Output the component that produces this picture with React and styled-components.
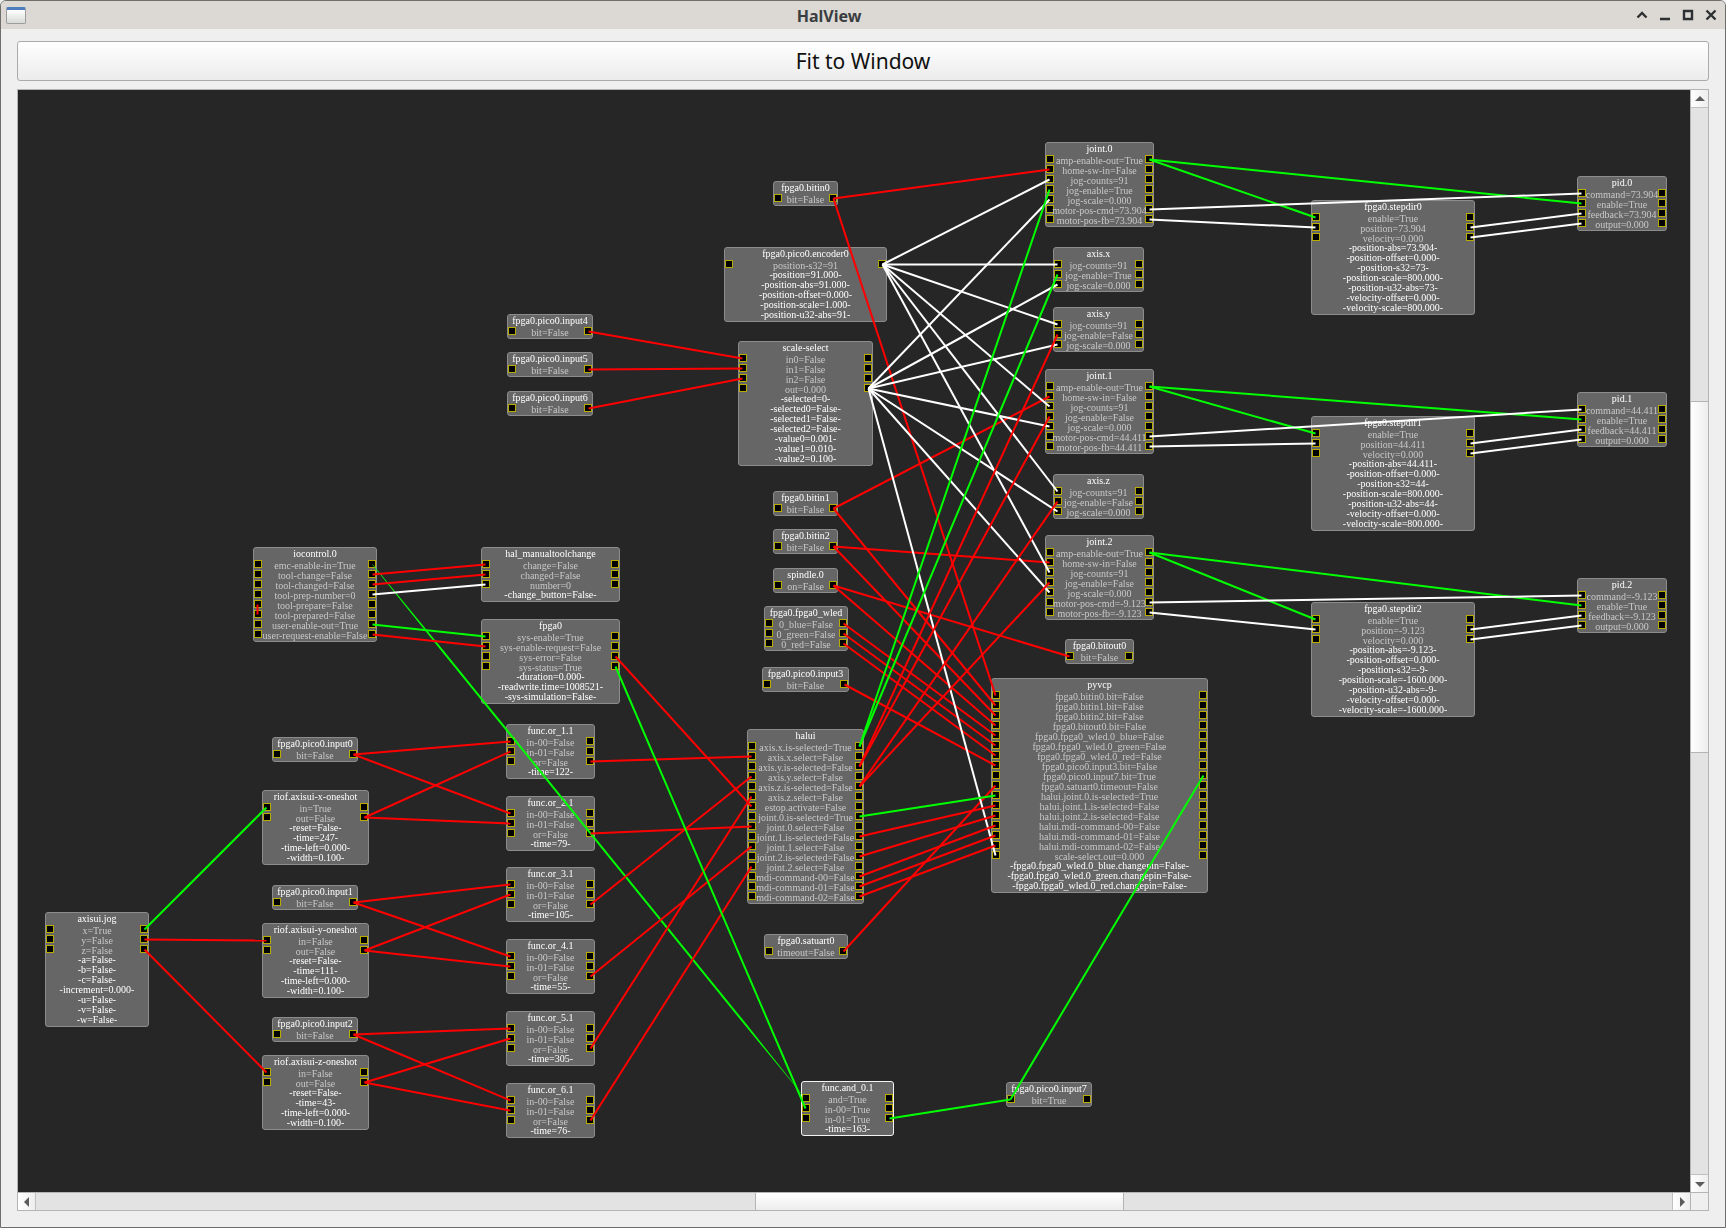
import React from "react";
import styled, { createGlobalStyle } from "styled-components";

const Global = createGlobalStyle`
  html, body { margin: 0; padding: 0; overflow: hidden; background: #efefef; }
  * { box-sizing: border-box; }
`;

/* Scene origin in page pixels; node coordinates below are page pixels. */
const OX = 18;
const OY = 90;

const pins = (...l) => l;
const NODES = {
  jog: { t: "axisui.jog", x: 45, y: 912, w: 104, p: pins("x=True", "y=False", "z=False"), a: ["-a=False-", "-b=False-", "-c=False-", "-increment=0.000-", "-u=False-", "-v=False-", "-w=False-"] },
  riofx: { t: "riof.axisui-x-oneshot", x: 262, y: 790, w: 107, p: pins("in=True", "out=False"), a: ["-reset=False-", "-time=247-", "-time-left=0.000-", "-width=0.100-"] },
  riofy: { t: "riof.axisui-y-oneshot", x: 262, y: 923, w: 107, p: pins("in=False", "out=False"), a: ["-reset=False-", "-time=111-", "-time-left=0.000-", "-width=0.100-"] },
  riofz: { t: "riof.axisui-z-oneshot", x: 262, y: 1055, w: 107, p: pins("in=False", "out=False"), a: ["-reset=False-", "-time=43-", "-time-left=0.000-", "-width=0.100-"] },
  in0: { t: "fpga0.pico0.input0", x: 272, y: 737, w: 86, p: pins("bit=False") },
  in1: { t: "fpga0.pico0.input1", x: 272, y: 885, w: 86, p: pins("bit=False") },
  in2: { t: "fpga0.pico0.input2", x: 272, y: 1017, w: 86, p: pins("bit=False") },
  f1: { t: "func.or_1.1", x: 506, y: 724, w: 89, p: pins("in-00=False", "in-01=False", "or=False"), a: ["-time=122-"] },
  f2: { t: "func.or_2.1", x: 506, y: 796, w: 89, p: pins("in-00=False", "in-01=False", "or=False"), a: ["-time=79-"] },
  f3: { t: "func.or_3.1", x: 506, y: 867, w: 89, p: pins("in-00=False", "in-01=False", "or=False"), a: ["-time=105-"] },
  f4: { t: "func.or_4.1", x: 506, y: 939, w: 89, p: pins("in-00=False", "in-01=False", "or=False"), a: ["-time=55-"] },
  f5: { t: "func.or_5.1", x: 506, y: 1011, w: 89, p: pins("in-00=False", "in-01=False", "or=False"), a: ["-time=305-"] },
  f6: { t: "func.or_6.1", x: 506, y: 1083, w: 89, p: pins("in-00=False", "in-01=False", "or=False"), a: ["-time=76-"] },
  io: { t: "iocontrol.0", x: 253, y: 547, w: 124, p: pins("emc-enable-in=True", "tool-change=False", "tool-changed=False", "tool-prep-number=0", "tool-prepare=False", "tool-prepared=False", "user-enable-out=True", "user-request-enable=False") },
  hal: { t: "hal_manualtoolchange", x: 481, y: 547, w: 139, p: pins("change=False", "changed=False", "number=0"), a: ["-change_button=False-"] },
  fpga: { t: "fpga0", x: 481, y: 619, w: 139, p: pins("sys-enable=True", "sys-enable-request=False", "sys-error=False", "sys-status=True"), a: ["-duration=0.000-", "-readwrite.time=1008521-", "-sys-simulation=False-"] },
  in4: { t: "fpga0.pico0.input4", x: 507, y: 314, w: 86, p: pins("bit=False") },
  in5: { t: "fpga0.pico0.input5", x: 507, y: 352, w: 86, p: pins("bit=False") },
  in6: { t: "fpga0.pico0.input6", x: 507, y: 391, w: 86, p: pins("bit=False") },
  bit0: { t: "fpga0.bitin0", x: 773, y: 181, w: 65, p: pins("bit=False") },
  enc: { t: "fpga0.pico0.encoder0", x: 724, y: 247, w: 163, p: pins("position-s32=91"), a: ["-position=91.000-", "-position-abs=91.000-", "-position-offset=0.000-", "-position-scale=1.000-", "-position-u32-abs=91-"] },
  sel: { t: "scale-select", x: 738, y: 341, w: 135, p: pins("in0=False", "in1=False", "in2=False", "out=0.000"), a: ["-selected=0-", "-selected0=False-", "-selected1=False-", "-selected2=False-", "-value0=0.001-", "-value1=0.010-", "-value2=0.100-"] },
  bit1: { t: "fpga0.bitin1", x: 773, y: 491, w: 65, p: pins("bit=False") },
  bit2: { t: "fpga0.bitin2", x: 773, y: 529, w: 65, p: pins("bit=False") },
  sp: { t: "spindle.0", x: 773, y: 568, w: 65, p: pins("on=False") },
  wled: { t: "fpga0.fpga0_wled", x: 764, y: 606, w: 84, p: pins("0_blue=False", "0_green=False", "0_red=False") },
  in3: { t: "fpga0.pico0.input3", x: 762, y: 667, w: 87, p: pins("bit=False") },
  halui: { t: "halui", x: 747, y: 729, w: 117, p: pins("axis.x.is-selected=True", "axis.x.select=False", "axis.y.is-selected=False", "axis.y.select=False", "axis.z.is-selected=False", "axis.z.select=False", "estop.activate=False", "joint.0.is-selected=True", "joint.0.select=False", "joint.1.is-selected=False", "joint.1.select=False", "joint.2.is-selected=False", "joint.2.select=False", "mdi-command-00=False", "mdi-command-01=False", "mdi-command-02=False") },
  sat: { t: "fpga0.satuart0", x: 764, y: 934, w: 84, p: pins("timeout=False") },
  and: { t: "func.and_0.1", x: 801, y: 1081, w: 93, hot: true, p: pins("and=True", "in-00=True", "in-01=True"), a: ["-time=163-"] },
  in7: { t: "fpga0.pico0.input7", x: 1006, y: 1082, w: 86, p: pins("bit=True") },
  pyvcp: { t: "pyvcp", x: 991, y: 678, w: 217, p: pins("fpga0.bitin0.bit=False", "fpga0.bitin1.bit=False", "fpga0.bitin2.bit=False", "fpga0.bitout0.bit=False", "fpga0.fpga0_wled.0_blue=False", "fpga0.fpga0_wled.0_green=False", "fpga0.fpga0_wled.0_red=False", "fpga0.pico0.input3.bit=False", "fpga0.pico0.input7.bit=True", "fpga0.satuart0.timeout=False", "halui.joint.0.is-selected=True", "halui.joint.1.is-selected=False", "halui.joint.2.is-selected=False", "halui.mdi-command-00=False", "halui.mdi-command-01=False", "halui.mdi-command-02=False", "scale-select.out=0.000"), a: ["-fpga0.fpga0_wled.0_blue.changepin=False-", "-fpga0.fpga0_wled.0_green.changepin=False-", "-fpga0.fpga0_wled.0_red.changepin=False-"] },
  j0: { t: "joint.0", x: 1045, y: 142, w: 109, p: pins("amp-enable-out=True", "home-sw-in=False", "jog-counts=91", "jog-enable=True", "jog-scale=0.000", "motor-pos-cmd=73.904", "motor-pos-fb=73.904") },
  ax: { t: "axis.x", x: 1053, y: 247, w: 91, p: pins("jog-counts=91", "jog-enable=True", "jog-scale=0.000") },
  ay: { t: "axis.y", x: 1053, y: 307, w: 91, p: pins("jog-counts=91", "jog-enable=False", "jog-scale=0.000") },
  j1: { t: "joint.1", x: 1045, y: 369, w: 109, p: pins("amp-enable-out=True", "home-sw-in=False", "jog-counts=91", "jog-enable=False", "jog-scale=0.000", "motor-pos-cmd=44.411", "motor-pos-fb=44.411") },
  az: { t: "axis.z", x: 1053, y: 474, w: 91, p: pins("jog-counts=91", "jog-enable=False", "jog-scale=0.000") },
  j2: { t: "joint.2", x: 1045, y: 535, w: 109, p: pins("amp-enable-out=True", "home-sw-in=False", "jog-counts=91", "jog-enable=False", "jog-scale=0.000", "motor-pos-cmd=-9.123", "motor-pos-fb=-9.123") },
  bo: { t: "fpga0.bitout0", x: 1065, y: 639, w: 69, p: pins("bit=False") },
  sd0: { t: "fpga0.stepdir0", x: 1311, y: 200, w: 164, p: pins("enable=True", "position=73.904", "velocity=0.000"), a: ["-position-abs=73.904-", "-position-offset=0.000-", "-position-s32=73-", "-position-scale=800.000-", "-position-u32-abs=73-", "-velocity-offset=0.000-", "-velocity-scale=800.000-"] },
  sd1: { t: "fpga0.stepdir1", x: 1311, y: 416, w: 164, p: pins("enable=True", "position=44.411", "velocity=0.000"), a: ["-position-abs=44.411-", "-position-offset=0.000-", "-position-s32=44-", "-position-scale=800.000-", "-position-u32-abs=44-", "-velocity-offset=0.000-", "-velocity-scale=800.000-"] },
  sd2: { t: "fpga0.stepdir2", x: 1311, y: 602, w: 164, p: pins("enable=True", "position=-9.123", "velocity=0.000"), a: ["-position-abs=-9.123-", "-position-offset=0.000-", "-position-s32=-9-", "-position-scale=-1600.000-", "-position-u32-abs=-9-", "-velocity-offset=0.000-", "-velocity-scale=-1600.000-"] },
  pid0: { t: "pid.0", x: 1577, y: 176, w: 90, p: pins("command=73.904", "enable=True", "feedback=73.904", "output=0.000") },
  pid1: { t: "pid.1", x: 1577, y: 392, w: 90, p: pins("command=44.411", "enable=True", "feedback=44.411", "output=0.000") },
  pid2: { t: "pid.2", x: 1577, y: 578, w: 90, p: pins("command=-9.123", "enable=True", "feedback=-9.123", "output=0.000") },
};

const RED = "#ff0000";
const GREEN = "#00ff00";
const WHITE = "#ffffff";

const WIRES = [
  [GREEN, "jog.R0", "riofx.L0"], [RED, "jog.R1", "riofy.L0"], [RED, "jog.R2", "riofz.L0"],
  [RED, "in0.R0", "f1.L0"], [RED, "in0.R0", "f2.L0"], [RED, "riofx.R1", "f1.L1"], [RED, "riofx.R1", "f2.L1"],
  [RED, "in1.R0", "f3.L0"], [RED, "in1.R0", "f4.L0"], [RED, "riofy.R1", "f3.L1"], [RED, "riofy.R1", "f4.L1"],
  [RED, "in2.R0", "f5.L0"], [RED, "in2.R0", "f6.L0"], [RED, "riofz.R1", "f5.L1"], [RED, "riofz.R1", "f6.L1"],
  [RED, "f1.R2", "halui.L1"], [RED, "f2.R2", "halui.L8"], [RED, "f3.R2", "halui.L3"], [RED, "f4.R2", "halui.L10"],
  [RED, "f5.R2", "halui.L5"], [RED, "f6.R2", "halui.L12"], [RED, "fpga.R2", "halui.L6"],
  [RED, "io.R1", "hal.L0"], [RED, "io.R2", "hal.L1"], [WHITE, "io.R3", "hal.L2"],
  [GREEN, "io.R6", "fpga.L0"], [RED, "io.R7", "fpga.L1"], [RED, "io.L4", "io.L5"],
  [GREEN, "fpga.R3", "and.L1"], [GREEN, "and.R2", "in7.L0"], [GREEN, "in7.L0", "pyvcp.R8"],
  [RED, "in4.R0", "sel.L0"], [RED, "in5.R0", "sel.L1"], [RED, "in6.R0", "sel.L2"],
  [RED, "bit0.R0", "j0.L1"], [RED, "bit0.R0", "pyvcp.L0"], [RED, "bit1.R0", "j1.L1"], [RED, "bit1.R0", "pyvcp.L1"],
  [RED, "bit2.R0", "j2.L1"], [RED, "bit2.R0", "pyvcp.L2"], [RED, "sp.R0", "bo.L0"], [RED, "sp.R0", "pyvcp.L3"],
  [RED, "wled.R0", "pyvcp.L4"], [RED, "wled.R1", "pyvcp.L5"], [RED, "wled.R2", "pyvcp.L6"],
  [RED, "in3.R0", "pyvcp.L7"], [RED, "sat.R0", "pyvcp.L9"],
  [WHITE, "enc.R0", "j0.L2"], [WHITE, "enc.R0", "ax.L0"], [WHITE, "enc.R0", "ay.L0"], [WHITE, "enc.R0", "j1.L2"], [WHITE, "enc.R0", "az.L0"], [WHITE, "enc.R0", "j2.L2"],
  [WHITE, "sel.R3", "j0.L4"], [WHITE, "sel.R3", "ax.L2"], [WHITE, "sel.R3", "ay.L2"], [WHITE, "sel.R3", "j1.L4"], [WHITE, "sel.R3", "az.L2"], [WHITE, "sel.R3", "j2.L4"], [WHITE, "sel.R3", "pyvcp.L16"],
  [GREEN, "halui.R0", "ax.L1"], [GREEN, "halui.R0", "j0.L3"],
  [RED, "halui.R2", "ay.L1"], [RED, "halui.R2", "j1.L3"], [RED, "halui.R4", "az.L1"], [RED, "halui.R4", "j2.L3"],
  [GREEN, "halui.R7", "pyvcp.L10"], [RED, "halui.R9", "pyvcp.L11"], [RED, "halui.R11", "pyvcp.L12"],
  [RED, "halui.R13", "pyvcp.L13"], [RED, "halui.R14", "pyvcp.L14"], [RED, "halui.R15", "pyvcp.L15"],
  ...[["j0", "sd0", "pid0"], ["j1", "sd1", "pid1"], ["j2", "sd2", "pid2"]].flatMap(([j, s, p]) => [
    [GREEN, `${j}.R0`, `${s}.L0`], [GREEN, `${j}.R0`, `${p}.L1`],
    [WHITE, `${j}.R5`, `${p}.L0`], [WHITE, `${j}.R6`, `${s}.L1`],
    [WHITE, `${s}.R1`, `${p}.L2`], [WHITE, `${s}.R2`, `${p}.L3`],
  ]),
];

const pinPos = (ref) => {
  const [id, pin] = ref.split(".");
  const n = NODES[id];
  const i = Number(pin.slice(1));
  const x = pin[0] === "L" ? n.x + 4.5 : n.x + n.w - 4.5;
  return [x - OX, n.y + 17.5 + 10 * i - OY];
};

const taperPoints = (a, b) => {
  const dx = b[0] - a[0];
  const dy = b[1] - a[1];
  const len = Math.hypot(dx, dy);
  const nx = -dy / len;
  const ny = dx / len;
  const stops = [[0, 0.2], [0.16, 1], [0.86, 1], [1, 0.1]];
  const at = ([t, h], s) => `${a[0] + dx * t + nx * h * s},${a[1] + dy * t + ny * h * s}`;
  return [...stops.map((p) => at(p, 1)), ...[...stops].reverse().map((p) => at(p, -1))].join(" ");
};

const Window = styled.div`
  width: 100vw;
  height: 100vh;
  display: flex;
  flex-direction: column;
  border: 1px solid #6f6d6a;
  border-radius: 6px 6px 0 0;
  background: #efefef;
  overflow: hidden;
`;

const TitleBar = styled.header`
  height: 28px;
  flex: none;
  display: flex;
  align-items: center;
  justify-content: space-between;
  padding: 0 6px 0 5px;
  background: #dcd8d4;
  position: relative;
`;

const AppIcon = styled.div`
  width: 20px;
  height: 17px;
  border: 1px solid #9c9c9c;
  border-top: 3px solid #4f7cbd;
  border-radius: 2px;
  background: linear-gradient(180deg, #ffffff, #d6dbd6);
`;

const WindowTitle = styled.div`
  position: absolute;
  left: 0;
  right: 68px;
  top: 6px;
  text-align: center;
  font: bold 16px/19px "Noto Sans", sans-serif;
  color: #3a3d40;
`;

const Controls = styled.div`
  display: flex;
  align-items: center;
  gap: 7px;
`;

const Ctl = styled.svg`
  width: 16px;
  height: 16px;
  display: block;
  fill: none;
  stroke: #2e3133;
  stroke-width: 2.4;
`;

const Body = styled.main`
  flex: 1;
  min-height: 0;
  display: flex;
  flex-direction: column;
  gap: 8px;
  padding: 12px 16px 16px;
`;

const FitButton = styled.button`
  height: 40px;
  flex: none;
  border: 1px solid #ababab;
  border-radius: 3px;
  background: linear-gradient(180deg, #ffffff 0%, #ececec 100%);
  font: 400 21px "Noto Sans", sans-serif;
  color: #111;
  padding: 0;
`;

const Frame = styled.section`
  flex: 1;
  min-height: 0;
  display: grid;
  grid-template-columns: 1fr 18px;
  grid-template-rows: 1fr 18px;
  border: 1px solid #b4b4b4;
`;

const Scene = styled.div`
  position: relative;
  overflow: hidden;
  background: #262626;
`;

const Wires = styled.svg`
  position: absolute;
  left: 0;
  top: 0;
  width: 100%;
  height: 100%;
  pointer-events: none;
`;

const Node = styled.div`
  position: absolute;
  left: ${(p) => p.$x - OX}px;
  top: ${(p) => p.$y - OY}px;
  width: ${(p) => p.$w}px;
  padding-bottom: 1px;
  background: #666666;
  border: 1px solid ${(p) => (p.$hot ? "#f4f4f4" : "#8c8c8c")};
  border-radius: 3px;
  font: 10px/10px "Liberation Serif", serif;
  white-space: nowrap;
  filter: blur(0.3px);
`;

const NodeTitle = styled.div`
  height: 12px;
  line-height: 12px;
  text-align: center;
  color: #ffffff;
`;

const PinRow = styled.div`
  display: grid;
  grid-template-columns: 8px minmax(0, 1fr) 8px;
  height: 10px;
`;

const Pin = styled.span`
  width: 8px;
  height: 8px;
  background: #000;
  border: 1px solid #b8ab00;
`;

const PinLabel = styled.span`
  position: relative;
  z-index: 1;
  display: flex;
  justify-content: center;
  line-height: 11px;
  color: #c8c8c8;
`;

const Params = styled.div`
  margin: -1px 0 1px;
`;

const Param = styled.div`
  height: 10px;
  display: flex;
  justify-content: center;
  line-height: 11px;
  color: #ffffff;
`;

const VBar = styled.div`
  display: flex;
  flex-direction: column;
  border-left: 1px solid #b4b4b4;
  background: #e3e3e3;
`;

const HBar = styled.div`
  display: flex;
  border-top: 1px solid #b4b4b4;
  background: #e3e3e3;
`;

const Corner = styled.div`
  border-top: 1px solid #b4b4b4;
  border-left: 1px solid #b4b4b4;
  background: #efefef;
`;

const ArrowBtn = styled.div`
  flex: none;
  width: ${(p) => (p.$horizontal ? "18px" : "auto")};
  height: ${(p) => (p.$horizontal ? "auto" : "18px")};
  display: flex;
  align-items: center;
  justify-content: center;
  background: linear-gradient(90deg, #ffffff, #eeeeee);
  border-${(p) => p.$edge}: 1px solid #c0c0c0;
`;

const Arrow = styled.svg`
  width: 10px;
  height: 10px;
  fill: #5c5c5c;
  display: block;
`;

const Lead = styled.div`
  flex: none;
  ${(p) => (p.$h ? `height: ${p.$h}px;` : `width: ${p.$w}px;`)}
`;

const Thumb = styled.div`
  flex: none;
  ${(p) =>
    p.$h
      ? `height: ${p.$h}px; border-top: 1px solid #b4b4b4; border-bottom: 1px solid #b4b4b4; background: linear-gradient(90deg, #ffffff, #ededed);`
      : `width: ${p.$w}px; border-left: 1px solid #b4b4b4; border-right: 1px solid #b4b4b4; background: linear-gradient(180deg, #ffffff, #ededed);`}
`;

const Rest = styled.div`
  flex: 1;
`;

const HalNode = ({ n }) => (
  <Node $x={n.x} $y={n.y} $w={n.w} $hot={n.hot}>
    <NodeTitle>{n.t}</NodeTitle>
    {n.p.map((label) => (
      <PinRow key={label}>
        <Pin />
        <PinLabel>{label}</PinLabel>
        <Pin />
      </PinRow>
    ))}
    {n.a && (
      <Params>
        {n.a.map((label) => (
          <Param key={label}>{label}</Param>
        ))}
      </Params>
    )}
  </Node>
);

export default function App() {
  return (
    <>
      <Global />
      <Window>
        <TitleBar>
          <AppIcon />
          <WindowTitle>HalView</WindowTitle>
          <Controls>
            <Ctl viewBox="0 0 16 16"><path d="M3.5 10.5 8 6l4.5 4.5" /></Ctl>
            <Ctl viewBox="0 0 16 16"><path d="M3 12h10" /></Ctl>
            <Ctl viewBox="0 0 16 16"><path d="M4 4h8v8H4z" /></Ctl>
            <Ctl viewBox="0 0 16 16"><path d="M3.5 3.5l9 9M12.5 3.5l-9 9" /></Ctl>
          </Controls>
        </TitleBar>
        <Body>
          <FitButton>Fit to Window</FitButton>
          <Frame>
            <Scene>
              {Object.entries(NODES).map(([id, n]) => (
                <HalNode key={id} n={n} />
              ))}
              <Wires>
                <polygon points={taperPoints(pinPos("io.R0"), pinPos("and.L0"))} fill={GREEN} />
                {WIRES.map(([color, a, b]) => {
                  const [x1, y1] = pinPos(a);
                  const [x2, y2] = pinPos(b);
                  return <line key={a + b} x1={x1} y1={y1} x2={x2} y2={y2} stroke={color} strokeWidth="2" />;
                })}
              </Wires>
            </Scene>
            <VBar>
              <ArrowBtn $edge="bottom">
                <Arrow viewBox="0 0 10 10"><path d="M5 2 10 7H0z" /></Arrow>
              </ArrowBtn>
              <Lead $h={293} />
              <Thumb $h={352} />
              <Rest />
              <ArrowBtn $edge="top">
                <Arrow viewBox="0 0 10 10"><path d="M0 3h10L5 8z" /></Arrow>
              </ArrowBtn>
            </VBar>
            <HBar>
              <ArrowBtn $horizontal $edge="right">
                <Arrow viewBox="0 0 10 10"><path d="M2 5 7 0v10z" /></Arrow>
              </ArrowBtn>
              <Lead $w={719} />
              <Thumb $w={369} />
              <Rest />
              <ArrowBtn $horizontal $edge="left">
                <Arrow viewBox="0 0 10 10"><path d="M3 0l5 5-5 5z" /></Arrow>
              </ArrowBtn>
            </HBar>
            <Corner />
          </Frame>
        </Body>
      </Window>
    </>
  );
}
